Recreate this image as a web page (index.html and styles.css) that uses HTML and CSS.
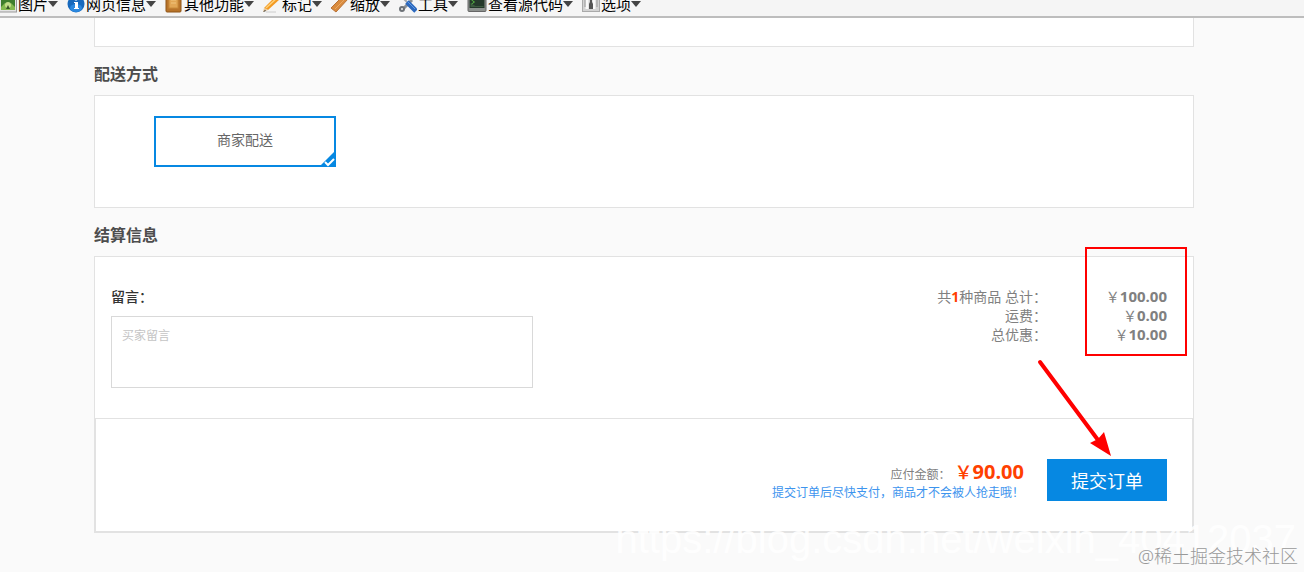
FILE: index.html
```html
<!DOCTYPE html>
<html lang="zh-CN">
<head>
  <meta charset="UTF-8" />
  <meta name="viewport" content="width=device-width, initial-scale=1.0"/>
  <title>提交订单</title>
  <link rel="stylesheet" href="styles.css">
</head>
<body>
  <div class="toolbar">
    <button class="tool">
      <svg class="tool-icon" viewBox="0 0 18 18"><rect x="0.5" y="1" width="17" height="16" fill="#e4e4e4" stroke="#999"/><rect x="2" y="3" width="14" height="12" fill="#3f7d2c"/><path d="M2 12 6 8 9 11 12 8 16 12V15H2z" fill="#85ba4f"/><circle cx="9" cy="10" r="3" fill="#c5dc8b"/><path d="M7 14 9 10 11 14z" fill="#3a5526"/></svg>
      <span>图片</span><i class="caret"></i>
    </button>
    <button class="tool">
      <svg class="tool-icon" viewBox="0 0 18 18"><circle cx="9" cy="9" r="8.5" fill="#1769bd"/><ellipse cx="9" cy="13" rx="6" ry="4" fill="#2b88df"/><path d="M7 7h4v6h1v1H7v-1h1V8H7z" fill="#fff"/><circle cx="9" cy="4" r="1.6" fill="#fff"/></svg>
      <span>网页信息</span><i class="caret"></i>
    </button>
    <button class="tool">
      <svg class="tool-icon" viewBox="0 0 18 18"><rect x="1" y="1" width="15" height="16" rx="1" fill="#b8742a" stroke="#8f5517"/><rect x="4" y="2" width="9" height="11" fill="#e2a755" stroke="#c98a3b"/><path d="M6 5h5M6 8h5" stroke="#f0c57e"/></svg>
      <span>其他功能</span><i class="caret"></i>
    </button>
    <button class="tool">
      <svg class="tool-icon" viewBox="0 0 18 18"><path d="M1 13 13 1l4 3L5 15z" fill="#f39a22"/><path d="M3 13 15 2" stroke="#ffd078" stroke-width="1.5"/><path d="M1 13 5 15 0 17z" fill="#e7c79b"/><path d="M0 17l2-2 1 1z" fill="#333"/><path d="M3 17h10" stroke="#ccc"/></svg>
      <span>标记</span><i class="caret"></i>
    </button>
    <button class="tool">
      <svg class="tool-icon" viewBox="0 0 18 18"><path d="M0 13 13 0l4 4L5 17z" fill="#d98b3e" stroke="#b87238"/><path d="M4 14 15 3" stroke="#e9a865"/></svg>
      <span>缩放</span><i class="caret"></i>
    </button>
    <button class="tool">
      <svg class="tool-icon" viewBox="0 0 18 18"><path d="M3 15 13 5" stroke="#8c9196" stroke-width="3"/><circle cx="3" cy="14" r="2" fill="#eee" stroke="#6d7277" stroke-width="2"/><path d="M2 1 9 8" stroke="#a5a9ad" stroke-width="2"/><path d="M8 7 17 16" stroke="#2c68bd" stroke-width="5"/><path d="M8 6 16 14" stroke="#5e9ae4" stroke-width="1"/></svg>
      <span>工具</span><i class="caret"></i>
    </button>
    <button class="tool">
      <svg class="tool-icon wide" viewBox="0 0 19 18"><rect x="0.5" y="0.5" width="18" height="16" rx="1" fill="#8d918e" stroke="#666"/><rect x="2" y="2" width="15" height="11" fill="#24382a"/><path d="M3 8l5 3h8v1H3z" fill="#3c5a3f"/><path d="M4 5l3 2-3 2" fill="none" stroke="#54b541"/></svg>
      <span>查看源代码</span><i class="caret"></i>
    </button>
    <button class="tool">
      <svg class="tool-icon" viewBox="0 0 18 18"><rect x="0.5" y="0.5" width="17" height="16" fill="#d3d3d3" stroke="#aaa"/><path d="M5 2v12M12 2v12" stroke="#fafafa" stroke-width="3"/><path d="M8 2v5l-1 2v5h4V9l-1-2V2z" fill="#555"/><path d="M3 4v8M15 4v8" stroke="#999"/></svg>
      <span>选项</span><i class="caret"></i>
    </button>
  </div>

  <form class="container">
    <div class="box prev-box"></div>

    <h2>配送方式</h2>
    <div class="box delivery">
      <label class="option">
        <input type="radio" name="delivery" checked />
        <span>商家配送</span>
        <svg class="tick" viewBox="0 0 17 17"><path d="M17 0V17H0z" fill="#0688e2"/><path d="M6 12 9 15 15 9" fill="none" stroke="#fff" stroke-width="2"/></svg>
      </label>
    </div>

    <h2>结算信息</h2>
    <div class="box">
      <div class="settle">
        <div class="message">
          <label for="msg">留言：</label>
          <textarea id="msg" placeholder="买家留言"></textarea>
        </div>
        <dl class="totals">
          <dt>共<b class="count">1</b>种商品 总计：</dt>
          <dd>￥<b>100.00</b></dd>
          <dt>运费：</dt>
          <dd>￥<b>0.00</b></dd>
          <dt>总优惠：</dt>
          <dd>￥<b>10.00</b></dd>
        </dl>
      </div>
      <div class="pay">
        <div class="pay-info">
          <p class="payable">应付金额：<strong>￥<b>90.00</b></strong></p>
          <p class="hint">提交订单后尽快支付，商品才不会被人抢走哦！</p>
        </div>
        <button class="submit" type="button">提交订单</button>
      </div>
      <!-- red frame round the amounts and arrow to the submit button -->
      <div class="frame"></div>
      <svg class="arrow" viewBox="0 0 76 98"><path d="M4 4 62 82" stroke="#f00" stroke-width="4" stroke-linecap="round"/><path d="M75 98 54 85 62 81 68 74z" fill="#f00"/></svg>
    </div>
  </form>

  <div class="url-mark">https://blog.csdn.net/weixin_40412037</div>
  <div class="site-mark">@稀土掘金技术社区</div>
</body>
</html>
```
FILE: styles.css
```css
* {
  box-sizing: border-box;
}
body {
  margin: 0;
  position: relative;
  min-height: 100vh;
  overflow: hidden;
  background: #fafafa;
  color: #808080;
  font-family: "Noto Sans", "Noto Sans CJK SC", sans-serif;
  font-size: 14px;
}
button, textarea {
  font-family: inherit;
}

/* Toolbar */
.toolbar {
  display: flex;
  align-items: flex-end;
  gap: 9px;
  height: 18px;
  margin-left: -1px;
  overflow: hidden;
  background: #f5f5f5;
  border-bottom: 2px solid #bdbdbd;
}
.tool {
  display: flex;
  align-items: center;
  flex: none;
  padding: 0;
  border: none;
  background: none;
  color: #000;
  font-size: 15px;
  line-height: 24px;
}
.tool-icon {
  width: 18px;
  height: 18px;
  margin-right: 1px;
}
.tool-icon.wide {
  width: 20px;
}
.caret {
  border: 5px solid transparent;
  border-top: 6px solid #444;
  border-bottom: none;
}

/* Order form */
.container {
  width: calc(100% - 204px);
  margin-left: 94px;
}
.box {
  position: relative;
  background: #fff;
  border: 1px solid #e2e2e2;
}
.prev-box {
  height: 29px;
  border-top: none;
}
h2 {
  margin: 0;
  padding: 16px 0 10px;
  color: #4d4d4d;
  font-size: 16px;
  line-height: 22px;
}
.delivery {
  padding: 20px 59px 40px;
}
.option {
  position: relative;
  display: block;
  width: 182px;
  padding-bottom: 4px;
  border: 2px solid #0688e2;
  color: #666;
  line-height: 43px;
  text-align: center;
}
.option input {
  position: absolute;
  opacity: 0;
}
.tick {
  position: absolute;
  right: -2px;
  bottom: -2px;
  width: 17px;
  height: 17px;
}
.settle {
  display: flex;
  justify-content: space-between;
  padding: 30px 26px 30px 16px;
}
.message {
  width: 422px;
}
.message label {
  display: block;
  margin-bottom: 9px;
  color: #333;
  font-weight: 500;
  line-height: 20px;
}
.message textarea {
  display: block;
  width: 100%;
  height: 72px;
  padding: 10px;
  border: 1px solid #d9d9d9;
  font-size: 12px;
  line-height: 18px;
  resize: none;
}
.message textarea::placeholder {
  color: #c4c4c4;
}
.totals {
  display: grid;
  grid-template-columns: auto 120px;
  align-content: start;
  margin: 0;
  line-height: 19px;
  text-align: right;
}
.totals dd {
  margin: 0;
}
.totals dd b {
  font-family: "Open Sans", sans-serif;
  font-size: 15px;
  line-height: 18px;
}
.count {
  color: #ff4000;
}
.pay {
  display: flex;
  justify-content: flex-end;
  align-items: flex-start;
  gap: 23px;
  padding: 40px 25px 30px;
  border: 1px solid #e2e2e2;
}
.pay-info p {
  margin: 0;
  font-size: 12px;
}
.pay-info .payable {
  display: flex;
  justify-content: flex-end;
  align-items: baseline;
  gap: 4px;
  height: 26px;
  line-height: 26px;
}
.payable strong {
  color: #ff4000;
  font-size: 18px;
  font-weight: 500;
}
.payable strong b {
  font-family: "Open Sans", sans-serif;
  font-size: 20px;
  font-weight: 700;
}
.pay-info .hint {
  color: #3d94ee;
  line-height: 16px;
}
.submit {
  width: 120px;
  height: 42px;
  padding: 0;
  border: none;
  background: #0688e2;
  color: #fff;
  font-size: 18px;
}

/* Red marks */
.frame {
  position: absolute;
  top: -10px;
  right: 6px;
  width: 102px;
  height: 109px;
  border: 2px solid #f00;
}
.arrow {
  position: absolute;
  top: 101px;
  right: 81px;
  width: 76px;
  height: 98px;
}

/* Watermarks */
.url-mark {
  position: absolute;
  right: 8px;
  bottom: 10px;
  color: rgba(255, 255, 255, 0.9);
  font-family: "Liberation Sans", Arial, sans-serif;
  font-size: 40px;
  line-height: 46px;
}
.site-mark {
  position: absolute;
  right: 6px;
  bottom: 4px;
  color: #999;
  font-size: 18px;
  font-weight: 300;
  line-height: 24px;
}
```
